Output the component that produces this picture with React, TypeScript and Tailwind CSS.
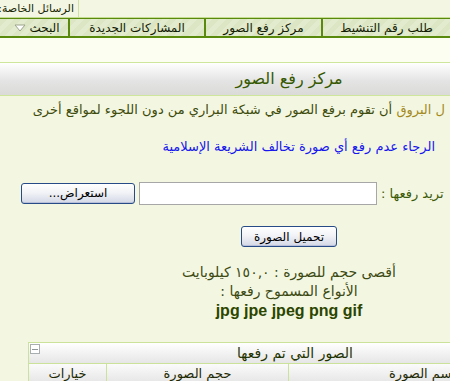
const tabs = [
  { label: "طلب رقم التنشيط", w: "w-[129px]" },
  { label: "مركز رفع الصور", w: "w-[117px]" },
  { label: "المشاركات الجديدة", w: "w-[136px]" },
];

function XpButton({ children, className }: { children: React.ReactNode; className: string }) {
  return (
    <button
      className={`flex items-center justify-center rounded-[3px] border border-[#264b86] bg-[linear-gradient(#ffffff,#f2f3f7_45%,#d3d8e6)] text-[12px] text-black shadow-[inset_0_-1px_0_#b7c0d8] ${className}`}
    >
      {children}
    </button>
  );
}

export default function App() {
  return (
    <div dir="rtl" className="w-[450px] h-[381px] overflow-hidden bg-[#fbfef0] font-['DejaVu_Sans',sans-serif]">
      {/* top strip */}
      <div className="flex h-[18px] justify-end border-b border-[#c5dd92] bg-[#f2f6e2]">
        <div className="w-[79px] border-r border-[#cfe2a0] overflow-hidden whitespace-nowrap pr-[4px] text-[11px] leading-[17px] text-[#1a2704]">
          الرسائل الخاصة:
        </div>
      </div>

      {/* tab bar */}
      <div className="flex h-[20px] border-t border-b-2 border-[#5a8a0c] bg-[repeating-linear-gradient(135deg,#dce6c4_0px,#dce6c4_5px,#e3ebcf_5px,#e3ebcf_10px)]">
        {tabs.map((t) => (
          <div key={t.label} className={`${t.w} shrink-0 border-l-2 border-[#5a8a0c] flex items-center justify-center text-[12px] text-[#121c04] whitespace-nowrap`}>
            {t.label}
          </div>
        ))}
        <div className="flex flex-1 items-center justify-center gap-[3px] pl-[6px] text-[12px] text-[#121c04] whitespace-nowrap">
          <span>البحث</span>
          <svg width="12" height="8" viewBox="0 0 12 8">
            <path d="M1 1 L11 1 L6 7 Z" fill="#ffffff" stroke="#9aa58a" strokeWidth="1" />
          </svg>
        </div>
      </div>

      <div className="h-[24px]" />

      {/* panel header */}
      <div className="flex h-[34px] items-center justify-center border-y border-[#cde69c] bg-[linear-gradient(#ffffff,#e4e4e4_55%,#dadad8)] pl-[128px] text-[16px] text-[#355800]">
        مركز رفع الصور
      </div>

      {/* content */}
      <div className="h-[300px] bg-[#f3f7e1]">
        <div className="overflow-hidden whitespace-nowrap pr-[5px] pt-[6px] text-[13px] leading-[16px] text-[#3e4b0c]">
          <span className="text-[#a48a1c]">ل البروق</span> أن تقوم برفع الصور في شبكة البراري من دون اللجوء لمواقع أخرى
        </div>

        <div className="whitespace-nowrap pr-[15px] pt-[21px] text-[13px] leading-[16px] text-[#1616ee]">
          الرجاء عدم رفع أي صورة تخالف الشريعة الإسلامية
        </div>

        <div className="mt-[26px] flex items-center">
          <div dir="ltr" className="w-[73px] shrink-0">
            <span dir="rtl" className="inline-block whitespace-nowrap pl-[4px] text-[13px] text-[#3b5a08]">
              تريد رفعها :
            </span>
          </div>
          <div className="h-[23px] w-[238px] shrink-0 border border-[#a7a7a7] bg-white" />
          <XpButton className="mr-[4px] h-[21px] w-[114px] shrink-0">استعراض...</XpButton>
        </div>

        <div className="flex justify-center pl-[128px] pt-[21px]">
          <XpButton className="h-[21px] w-[96px]">تحميل الصورة</XpButton>
        </div>

        <div className="flex flex-col items-center pl-[128px] pt-[16px] text-[14px] leading-[19px] text-[#3d4a14]">
          <div>أقصى حجم للصورة : ١٥٠,٠ كيلوبايت</div>
          <div>الأنواع المسموح رفعها :</div>
          <div dir="ltr" className="font-['Liberation_Sans',sans-serif] font-bold text-[16px] text-[#2c4500]">jpg jpe jpeg png gif</div>
        </div>

        {/* uploaded images table */}
        <div className="mt-[22px] mr-[-20px] ml-[28px] border-x border-t border-[#cbe29a]">
          <div className="relative flex h-[21px] items-center justify-center border-b border-[#cbe29a] bg-[linear-gradient(#ffffff,#e6e6e6)] pl-[92px] text-[14px] text-[#1f3300]">
            الصور التي تم رفعها
            <span className="absolute left-[1px] top-[1px] flex h-[10px] w-[10px] items-center justify-center border border-[#a9aeb0] bg-white">
              <span className="h-px w-[6px] bg-[#8f9699]" />
            </span>
          </div>
          <div className="flex h-[20px] bg-[linear-gradient(#fbfbfb,#e4e4e4)] text-[13px] text-[#1f2a05]">
            <div className="flex w-[181px] items-center pr-[14px] whitespace-nowrap border-l border-[#cbe29a]">اسم الصورة</div>
            <div className="flex w-[182px] items-center justify-center border-l border-[#cbe29a]">حجم الصورة</div>
            <div className="flex flex-1 items-center justify-center">خيارات</div>
          </div>
        </div>
      </div>
    </div>
  );
}
